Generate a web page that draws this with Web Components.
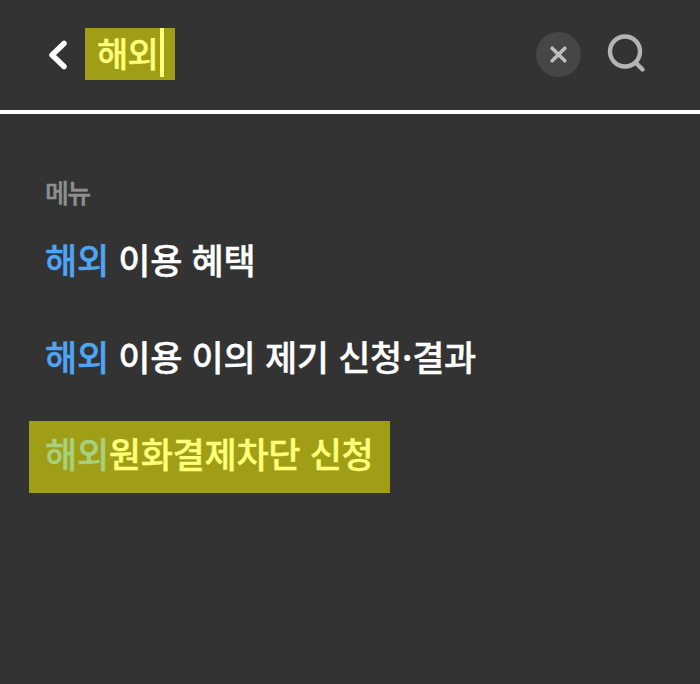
<!DOCTYPE html>
<html lang="ko">
<head>
<meta charset="utf-8">
<style>
  html, body { margin: 0; background: #333333; }
  body { width: 700px; height: 684px; overflow: hidden; font-family: "Noto Sans CJK KR", "Noto Sans", sans-serif; }
</style>
</head>
<body>
<search-bar query="해외"></search-bar>
<menu-section label="메뉴">
  <menu-row><b slot="match">해외</b> 이용 혜택</menu-row>
  <menu-row><b slot="match">해외</b> 이용 이의 제기 신청·결과</menu-row>
  <menu-row selected><b slot="match">해외</b>원화결제차단 신청</menu-row>
</menu-section>
<script>
class SearchBar extends HTMLElement {
    constructor(){
        super();
        this.shadowDOM = this.attachShadow({mode: 'open'});
    }
    connectedCallback(){
        this.shadowDOM.innerHTML = `
        <style>
            :host {
                display: flex;
                align-items: center;
                height: 110px;
                border-bottom: 4px solid #fff;
                padding: 0 54px 0 47px;
                box-sizing: content-box;
            }
            .back { width: 22px; height: 30px; margin-right: 16px; margin-top: 0; }
            .query {
                display: flex;
                align-items: center;
                width: 90px;
                height: 52px;
                margin-top: -2px;
                padding-left: 12px;
                box-sizing: border-box;
                background: #a09e16;
                color: #ffff7a;
                font-size: 34px;
                font-weight: 500;
                -webkit-text-stroke: 0.4px currentColor;
                letter-spacing: -0.8px;
            }
            .query span { position: relative; top: -2px; }
            .caret { align-self: flex-start; width: 4px; height: 49px; margin-left: 2px; background: #ffff7a; }
            .clear {
                margin-left: auto;
                width: 45px;
                height: 45px;
                border-radius: 50%;
                background: #464646;
                display: flex;
                align-items: center;
                justify-content: center;
                margin-top: -1px;
            }
            .search { width: 40px; height: 40px; margin-left: 26px; margin-right: -1px; margin-top: -2px; }
        </style>
        <svg class="back" viewBox="0 0 22 30" fill="none" stroke="#fff" stroke-width="5.5" stroke-linecap="round" stroke-linejoin="round"><path d="M17 3.5 L5 15 L17 26.5"/></svg>
        <div class="query"><span>${this.getAttribute('query')}</span><i class="caret"></i></div>
        <div class="clear"><svg width="17" height="17" viewBox="0 0 17 17" fill="none" stroke="#bdbdbd" stroke-width="3.6" stroke-linecap="round"><path d="M2.2 2.2 L14.8 14.8 M14.8 2.2 L2.2 14.8"/></svg></div>
        <svg class="search" viewBox="0 0 40 40" fill="none" stroke="#b4b4b4" stroke-width="4.4" stroke-linecap="round"><circle cx="18" cy="17.5" r="15"/><path d="M29 29 L35.5 35.5"/></svg>
        `;
    }
}
class MenuSection extends HTMLElement {
    constructor(){
        super();
        this.shadowDOM = this.attachShadow({mode: 'open'});
    }
    connectedCallback(){
        this.shadowDOM.innerHTML = `
        <style>
            :host { display: block; padding: 56px 0 0 45px; }
            .label {
                color: #8f8f8f;
                font-size: 26px;
                font-weight: 500;
                -webkit-text-stroke: 0.4px currentColor;
                letter-spacing: -1.7px;
                line-height: 44px;
                margin-bottom: 13px;
            }
            .rows { display: flex; flex-direction: column; gap: 25px; align-items: flex-start; }
        </style>
        <div class="label">${this.getAttribute('label')}</div>
        <div class="rows"><slot></slot></div>
        `;
    }
}
class MenuRow extends HTMLElement {
    constructor(){
        super();
        this.shadowDOM = this.attachShadow({mode: 'open'});
        this.shadowDOM.innerHTML = `
        <style>
            :host {
                display: block;
                color: #fff;
                font-size: 35px;
                font-weight: 500;
                -webkit-text-stroke: 0.4px currentColor;
                letter-spacing: -0.3px;
                line-height: 64px;
                padding-bottom: 8px;
                white-space: nowrap;
            }
            :host([selected]) {
                background: #a09e16;
                color: #ffff7a;
                margin-left: -16px;
                padding: 0 16px 8px;
            }
            ::slotted([slot=match]) { color: #4da6f5; font-weight: 500; }
            :host([selected]) ::slotted([slot=match]) { color: #a8d17e; }
        </style>
        <slot name="match"></slot><slot></slot>
        `;
    }
}
customElements.define('search-bar', SearchBar);
customElements.define('menu-section', MenuSection);
customElements.define('menu-row', MenuRow);
</script>
</body>
</html>
